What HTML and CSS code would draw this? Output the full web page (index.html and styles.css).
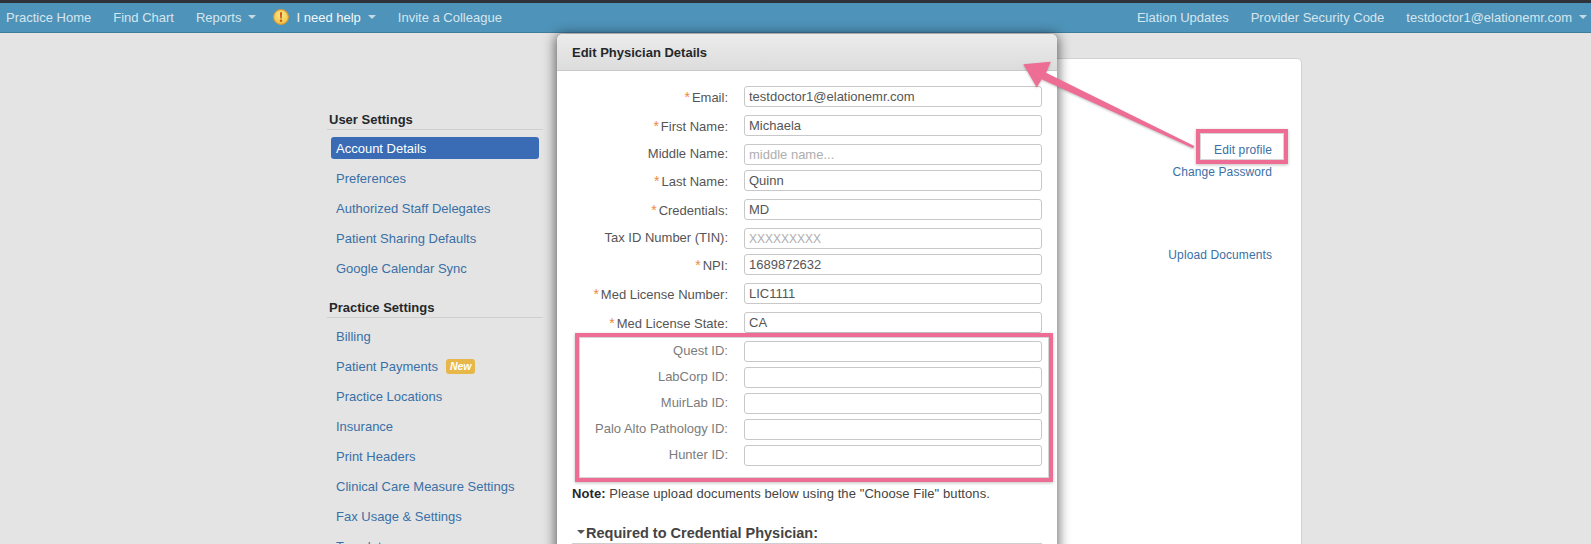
FILE: index.html
```html
<!DOCTYPE html>
<html lang="en">
<head>
<meta charset="utf-8">
<title>Edit Physician Details</title>
<link rel="stylesheet" href="styles.css">
</head>
<body>
<div class="page">
  <header class="topbar">
    <nav class="nav-group">
      <a class="nav-link">Practice Home</a>
      <a class="nav-link">Find Chart</a>
      <a class="nav-link">Reports<span class="caret"></span></a>
      <a class="nav-link nav-help">
        <svg class="help-icon" viewBox="0 0 16 16" width="16" height="16" aria-hidden="true">
          <defs>
            <radialGradient id="helpFill" cx="50%" cy="35%" r="65%">
              <stop offset="0" stop-color="#fbe88a"/>
              <stop offset="1" stop-color="#f3c440"/>
            </radialGradient>
          </defs>
          <circle cx="8" cy="8" r="7.400" fill="url(#helpFill)" stroke="#d99a3a" stroke-width="1.100"/>
          <path d="M6.900 3.200h2.200L8.700 9.400H7.300z" fill="#c9581f"/>
          <circle cx="8" cy="11.700" r="1.250" fill="#c9581f"/>
        </svg>
        <span class="help-text">I need help</span><span class="caret"></span>
      </a>
      <a class="nav-link">Invite a Colleague</a>
    </nav>
    <nav class="nav-group">
      <a class="nav-link">Elation Updates</a>
      <a class="nav-link">Provider Security Code</a>
      <a class="nav-link">testdoctor1@elationemr.com<span class="caret"></span></a>
    </nav>
  </header>

  <main class="content">
    <aside class="sidebar">
      <section class="side-section">
        <h3 class="side-title">User Settings</h3>
        <ul class="side-list">
          <li class="side-item active">Account Details</li>
          <li class="side-item">Preferences</li>
          <li class="side-item">Authorized Staff Delegates</li>
          <li class="side-item">Patient Sharing Defaults</li>
          <li class="side-item">Google Calendar Sync</li>
        </ul>
      </section>
      <section class="side-section">
        <h3 class="side-title">Practice Settings</h3>
        <ul class="side-list">
          <li class="side-item">Billing</li>
          <li class="side-item">Patient Payments<span class="badge">New</span></li>
          <li class="side-item">Practice Locations</li>
          <li class="side-item">Insurance</li>
          <li class="side-item">Print Headers</li>
          <li class="side-item">Clinical Care Measure Settings</li>
          <li class="side-item">Fax Usage &amp; Settings</li>
          <li class="side-item">Templates</li>
        </ul>
      </section>
    </aside>
    <section class="card">
      <a class="card-link link-edit">Edit profile</a>
      <a class="card-link link-password">Change Password</a>
      <a class="card-link link-upload">Upload Documents</a>
    </section>
  </main>

  <div class="modal">
    <div class="modal-head">Edit Physician Details</div>
    <form class="modal-body">
      <div class="row req"><label class="lbl"><i>*</i>Email:</label><input class="field" value="testdoctor1@elationemr.com"></div>
      <div class="row req"><label class="lbl"><i>*</i>First Name:</label><input class="field" value="Michaela"></div>
      <div class="row tight"><label class="lbl">Middle Name:</label><input class="field" placeholder="middle name..."></div>
      <div class="row req"><label class="lbl"><i>*</i>Last Name:</label><input class="field" value="Quinn"></div>
      <div class="row req"><label class="lbl"><i>*</i>Credentials:</label><input class="field" value="MD"></div>
      <div class="row tight"><label class="lbl">Tax ID Number (TIN):</label><input class="field field-mask" placeholder="XXXXXXXXX"></div>
      <div class="row req"><label class="lbl"><i>*</i>NPI:</label><input class="field" value="1689872632"></div>
      <div class="row req"><label class="lbl"><i>*</i>Med License Number:</label><input class="field" value="LIC1111"></div>
      <div class="row req"><label class="lbl"><i>*</i>Med License State:</label><input class="field" value="CA"></div>
      <div class="row tight lab"><label class="lbl">Quest ID:</label><input class="field"></div>
      <div class="row tight lab"><label class="lbl">LabCorp ID:</label><input class="field"></div>
      <div class="row tight lab"><label class="lbl">MuirLab ID:</label><input class="field"></div>
      <div class="row tight lab"><label class="lbl">Palo Alto Pathology ID:</label><input class="field"></div>
      <div class="row tight lab"><label class="lbl">Hunter ID:</label><input class="field"></div>
      <p class="note"><b>Note:</b> Please upload documents below using the "Choose File" buttons.</p>
      <h4 class="req-title"><span class="caret dark"></span>Required to Credential Physician:</h4>
    </form>
  </div>

  <div class="callout callout-edit"></div>
  <div class="callout callout-labs"></div>
  <svg class="arrow" viewBox="0 0 190 110" width="190" height="110" aria-hidden="true">
    <polygon points="0.300,3.300 27.700,0.700 23,11.700 171.300,85 170,87.300 18.700,18.300 13.700,26.300" fill="#ee6d94"/>
  </svg>
</div>
</body>
</html>
```

FILE: styles.css
```css
* { box-sizing: border-box; }
html, body { margin: 0; height: 100%; }
body {
  overflow: hidden;
  background: #e4e4e4;
  font-family: "Liberation Sans", Arial, sans-serif;
  font-size: 13px;
  color: #555;
}
.page { position: relative; width: 1591px; height: 544px; overflow: hidden; }

/* top bar */
.topbar {
  display: flex;
  justify-content: space-between;
  height: 33px;
  padding: 0 4px 0 6px;
  border-top: 3px solid #2d3338;
  border-bottom: 1px solid #3f7d9f;
  background: #4e93b9;
}
.nav-group { display: flex; align-items: center; gap: 22px; height: 28px; }
.nav-link { display: flex; align-items: center; color: #d6e6ef; white-space: nowrap; }
.nav-help { margin-left: -5px; }
.help-icon { margin-right: 7px; }
.help-text { color: #f2f7fa; }
.caret {
  display: inline-block;
  width: 0;
  height: 0;
  margin-left: 7px;
  border-style: solid;
  border-width: 4px 4px 0;
  border-color: #c6dae6 transparent transparent;
}
.caret.dark { margin: 0 1px 2px 5px; border-color: #555 transparent transparent; }

/* page content */
.content { display: flex; align-items: flex-start; }
.sidebar { width: 216px; margin: 78px 0 0 327px; flex: none; }
.side-section { margin-bottom: 20px; }
.side-title {
  margin: 0 0 7px;
  padding: 0 0 1px 2px;
  height: 19px;
  border-bottom: 1px solid #cfcfcf;
  font-size: 13px;
  line-height: 17px;
  font-weight: bold;
  color: #25282b;
}
.side-list { list-style: none; margin: 0 4px; padding: 0; }
.side-item {
  display: flex;
  align-items: center;
  height: 22px;
  margin-bottom: 8px;
  padding-left: 5px;
  border-radius: 3px;
  color: #3a70a6;
  white-space: nowrap;
}
.side-item.active { background: #3a6cb5; color: #fff; }
.badge {
  margin-left: 8px;
  padding: 0 4px;
  height: 15px;
  line-height: 15px;
  border-radius: 3px;
  background: #e8b74a;
  color: #fff;
  font-size: 10.500px;
  font-weight: bold;
  font-style: italic;
}
.card {
  position: relative;
  width: 739px;
  height: 600px;
  margin: 25px 0 0 20px;
  background: #fff;
  border: 1px solid #d2d2d2;
  border-radius: 5px;
  flex: none;
}
.card-link { position: absolute; right: 29px; color: #3a70a6; white-space: nowrap; font-size: 12px; line-height: 16px; letter-spacing: .1px; }
.link-edit { top: 83px; }
.link-password { top: 105px; }
.link-upload { top: 188px; }

/* modal */
.modal {
  position: absolute;
  left: 557px;
  top: 34px;
  width: 500px;
  height: 560px;
  background: #fff;
  border-radius: 6px 6px 0 0;
  box-shadow: 0 2px 12px 2px rgba(0, 0, 0, .55);
}
.modal-head {
  height: 37px;
  padding: 11px 15px 0;
  line-height: 16px;
  border-bottom: 1px solid #c9c9c9;
  border-radius: 6px 6px 0 0;
  background: linear-gradient(#ececec, #dcdcdc);
  font-weight: bold;
  color: #25282b;
}
.modal-body { padding: 15px 15px 0; }
.row { display: flex; align-items: flex-start; height: 21px; }
.row.req { margin-bottom: 8px; }
.row.tight { margin-bottom: 5px; }
.lbl {
  width: 156px;
  margin-right: 16px;
  flex: none;
  text-align: right;
  line-height: 19px;
  color: #555;
  white-space: nowrap;
}
.req .lbl { padding-top: 2px; }
.lbl i { color: #ec8a3b; font-style: normal; font-size: 14px; margin-right: 2px; }
.lab .lbl { color: #7c7c7c; }
.field {
  flex: 1;
  min-width: 0;
  height: 21px;
  padding: 0 4px;
  border: 1px solid #c8c8c8;
  border-radius: 3px;
  background: #fff;
  font: 13px "Liberation Sans", Arial, sans-serif;
  color: #555;
}
.field::placeholder { color: #aeaeae; opacity: 1; }
.field-mask { font-size: 12px; }
.note { margin: 20px 0 0; line-height: 16px; color: #444; letter-spacing: .08px; }
.note b { color: #25282b; }
.req-title {
  display: flex;
  align-items: center;
  margin: 20px 0 0;
  height: 22px;
  border-bottom: 1px solid #cfcfcf;
  font-size: 14.500px;
  font-weight: bold;
  color: #444;
  white-space: nowrap;
}

/* annotations */
.callout {
  position: absolute;
  border: 4px solid #ee6d94;
  box-shadow: 0 1px 3px rgba(0, 0, 0, .25), inset 0 0 0 1px #d6d6d6;
}
.callout-edit { left: 1196px; top: 129px; width: 92px; height: 35px; }
.callout-labs { left: 575px; top: 333px; width: 478px; height: 149px; }
.arrow { position: absolute; left: 1023px; top: 61px; filter: drop-shadow(0 1px 1px rgba(0, 0, 0, .25)); }
```
